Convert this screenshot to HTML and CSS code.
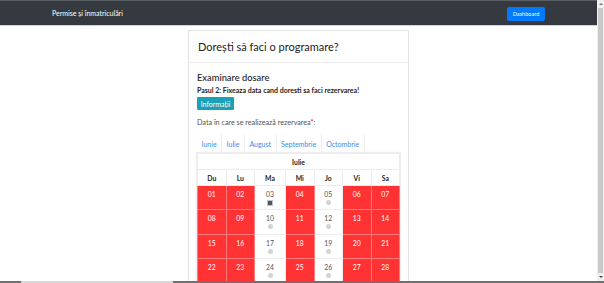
FILE: index.html
```html
<!DOCTYPE html>
<html lang="ro">
<head>
<meta charset="utf-8">
<title>Permise și înmatriculări</title>
<link rel="stylesheet" href="styles.css">
</head>
<body>
<nav class="navbar">
  <div class="nav-inner">
    <span class="brand">Permise și înmatriculări</span>
    <a class="btn-dash" href="#">Dashboard</a>
  </div>
</nav>
<main class="page">
  <section class="card">
    <header class="card-header"><h1>Dorești să faci o programare?</h1></header>
    <div class="card-body">
      <h2 class="section-title">Examinare dosare</h2>
      <p class="step">Pasul 2: Fixeaza data cand doresti sa faci rezervarea!</p>
      <button class="btn-info" type="button">Informații</button>
      <p class="label">Data în care se realizează rezervarea<span class="req">*</span>:</p>
      <ul class="tabs">
        <li class="tab">Iunie</li>
        <li class="tab">Iulie</li>
        <li class="tab">August</li>
        <li class="tab">Septembrie</li>
        <li class="tab">Octombrie</li>
      </ul>
      <table class="cal">
        <colgroup>
          <col class="c"><col class="c"><col class="c-wide"><col class="c"><col class="c"><col class="c"><col class="c">
        </colgroup>
        <thead>
          <tr><th colspan="7" class="month">Iulie</th></tr>
          <tr class="days"><th>Du</th><th>Lu</th><th>Ma</th><th>Mi</th><th>Jo</th><th>Vi</th><th>Sa</th></tr>
        </thead>
        <tbody>
          <tr>
            <td class="busy">01</td><td class="busy">02</td>
            <td class="free">03<span class="radio sel"></span></td>
            <td class="busy">04</td>
            <td class="free">05<span class="radio"></span></td>
            <td class="busy">06</td><td class="busy">07</td>
          </tr>
          <tr>
            <td class="busy">08</td><td class="busy">09</td>
            <td class="free">10<span class="radio"></span></td>
            <td class="busy">11</td>
            <td class="free">12<span class="radio"></span></td>
            <td class="busy">13</td><td class="busy">14</td>
          </tr>
          <tr>
            <td class="busy">15</td><td class="busy">16</td>
            <td class="free">17<span class="radio"></span></td>
            <td class="busy">18</td>
            <td class="free">19<span class="radio"></span></td>
            <td class="busy">20</td><td class="busy">21</td>
          </tr>
          <tr>
            <td class="busy">22</td><td class="busy">23</td>
            <td class="free">24<span class="radio"></span></td>
            <td class="busy">25</td>
            <td class="free">26<span class="radio"></span></td>
            <td class="busy">27</td><td class="busy">28</td>
          </tr>
        </tbody>
      </table>
    </div>
  </section>
</main>
<div class="vscroll"><span class="arrow up"></span><span class="thumb"></span><span class="arrow down"></span></div>
<div class="hline"><span class="seg"></span></div>
</body>
</html>
```

FILE: styles.css
```css
html, body {
  margin: 0;
  padding: 0;
  height: 100%;
  overflow: hidden;
}
body {
  font-family: Lato, "Open Sans", sans-serif;
  font-size: 7.5px;
  color: #333;
  background: #fff;
  width: 597px;
}
.navbar {
  background: #343a40;
  border-top: 1px solid #5a5f64;
  height: 24px;
  border-bottom: 1px solid #d0d2d4;
}
.nav-inner {
  width: 493px;
  margin: 0 auto;
  height: 24px;
  display: flex;
  align-items: center;
  justify-content: space-between;
}
.brand {
  color: #fff;
  font-size: 7px;
}
.btn-dash {
  background: #007bff;
  color: #fff;
  font-size: 5.6px;
  text-decoration: none;
  height: 14px;
  width: 38px;
  border-radius: 2px;
  display: flex;
  align-items: center;
  justify-content: center;
  margin-top: 1px;
}
.page {
  display: flex;
  justify-content: center;
  padding-top: 4px;
}
.card {
  width: 219px;
  border: 1px solid #e3e3e3;
  border-bottom: none;
  height: 300px;
}
.card-header {
  padding: 0 9px;
  height: 31px;
  display: flex;
  align-items: center;
  border-bottom: 1px solid #ececec;
}
.card-header h1 {
  margin: 0;
  font-size: 11px;
  font-weight: 400;
  color: #222;
}
.card-body {
  padding: 8px 9px 0 8px;
}
.section-title {
  margin: 0;
  font-size: 9.3px;
  font-weight: 500;
  color: #222;
  line-height: 13px;
}
.step {
  margin: 0;
  font-weight: 700;
  font-size: 7px;
  color: #222;
  line-height: 12px;
}
.btn-info {
  display: block;
  margin-top: 1px;
  background: #17a2b8;
  color: #fff;
  border: none;
  border-radius: 1px;
  font-family: inherit;
  font-size: 7px;
  height: 13px;
  width: 37px;
  padding: 0;
}
.label {
  margin: 7px 0 0;
  color: #555;
  font-size: 7.2px;
  line-height: 11px;
}
.req { color: #e00; }
.tabs {
  list-style: none;
  margin: 6px 0 0;
  padding: 0;
  display: flex;
  height: 19px;
}
.tab {
  padding: 0 4.5px;
  color: #3a8bf0;
  font-size: 7px;
  display: flex;
  align-items: center;
  border-right: 1px solid #eee;
}
.cal {
  width: 202px;
  border-collapse: collapse;
  table-layout: fixed;
  box-shadow: 0 0 1px 1px #eee;
}
.cal .c { width: 28.5px; }
.cal .c-wide { width: 31px; }
.cal th {
  font-weight: 700;
  font-size: 6.8px;
  color: #222;
  border: 1px solid #ececec;
  padding: 0;
}
.cal .month { height: 15px; }
.cal .days th { height: 15px; }
.cal td {
  height: 19.4px;
  padding: 0;
  text-align: center;
  vertical-align: top;
  font-size: 6.8px;
  line-height: 8px;
  border: 1px solid #eee;
}
.cal td.busy {
  background: #ff3333;
  color: #fff;
  border-color: #ff7a7a;
  padding-top: 4px;
}
.cal td.free {
  color: #555;
  padding-top: 4px;
}
.radio {
  display: block;
  width: 5px;
  height: 5px;
  border-radius: 50%;
  background: #d4d4d4;
  margin: 2px auto 0;
}
.radio.sel {
  border-radius: 0;
  width: 4px;
  height: 4px;
  background: #555;
  border: 1px solid #c0c0d8;
}
.vscroll {
  position: fixed;
  top: 0;
  right: 0;
  width: 7px;
  height: 281px;
  background: #f0f0f0;
  display: flex;
  flex-direction: column;
  align-items: center;
}
.arrow {
  width: 0;
  height: 0;
  border-left: 2px solid transparent;
  border-right: 2px solid transparent;
  margin: 3px 0;
}
.arrow.up { border-bottom: 2px solid #777; }
.arrow.down { border-top: 2px solid #444; }
.thumb {
  flex: 1;
  width: 5px;
  background: #c9c9c9;
}
.hline {
  position: fixed;
  left: 0;
  bottom: 0;
  width: 604px;
  height: 2px;
  background: #707070;
}
.seg {
  display: block;
  margin-left: 21px;
  width: 152px;
  height: 2px;
  background: #d8d8d8;
}
```
